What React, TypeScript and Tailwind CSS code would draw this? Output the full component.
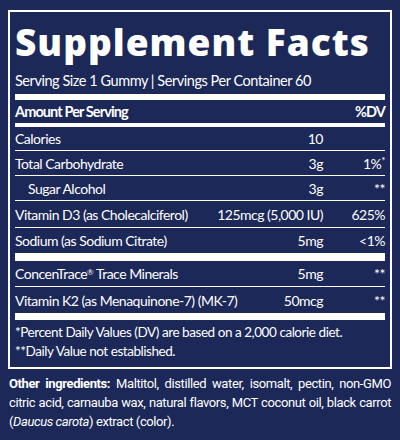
import React from 'react'

type Row = {
  label: React.ReactNode
  amount: string
  dv: React.ReactNode
  h: string
  indent?: boolean
}

const topRows: Row[] = [
  { label: 'Calories', amount: '10', dv: '', h: 'h-[24px]' },
  { label: 'Total Carbohydrate', amount: '3g', dv: <>1%<span className="align-top text-[10px]">*</span></>, h: 'h-[25px]' },
  { label: 'Sugar Alcohol', amount: '3g', dv: '**', h: 'h-[25px]', indent: true },
  { label: 'Vitamin D3 (as Cholecalciferol)', amount: '125mcg (5,000 IU)', dv: '625%', h: 'h-[27px]' },
  { label: 'Sodium (as Sodium Citrate)', amount: '5mg', dv: '<1%', h: 'h-[25px]' },
]

const bottomRows: Row[] = [
  {
    label: <>ConcenTrace<sup className="text-[8px]">®</sup> Trace Minerals</>,
    amount: '5mg',
    dv: '**',
    h: 'h-[26px]',
  },
  { label: 'Vitamin K2 (as Menaquinone-7) (MK-7)', amount: '50mcg', dv: '**', h: 'h-[26px]' },
]

function FactRow({ row, last }: { row: Row; last: boolean }) {
  return (
    <div className={`${row.h} flex items-center whitespace-nowrap ${last ? '' : 'border-b border-white'}`}>
      <div className={`flex-1 ${row.indent ? 'pl-[13px]' : ''}`}>{row.label}</div>
      <div className="text-right">{row.amount}</div>
      <div className="w-[62px] text-right">{row.dv}</div>
    </div>
  )
}

export default function App() {
  return (
    <div className="w-[400px] h-[440px] overflow-hidden bg-[#1c2858] text-white pt-[10px] px-[8px] font-['Lato',sans-serif] tracking-[-0.5px]">
      <div className="w-[384px] border-2 border-white px-[5px]">
        <div className="h-[58px] flex items-center font-['Open_Sans',sans-serif] font-extrabold text-[37px] tracking-[1px] leading-none">
          Supplement Facts
        </div>
        <div className="h-[22px] flex items-center text-[14.5px] tracking-[-0.45px]">
          Serving Size 1 Gummy | Servings Per Container 60
        </div>
        <div className="h-[6px] mt-[2px] bg-white" />
        <div className="h-[23px] flex items-center justify-between text-[14.5px] font-bold tracking-[-0.9px]">
          <span>Amount Per Serving</span>
          <span>%DV</span>
        </div>
        <div className="h-[4px] bg-white" />
        <div className="text-[14px]">
          {topRows.map((r, i) => (
            <FactRow key={i} row={r} last={i === topRows.length - 1} />
          ))}
        </div>
        <div className="h-[8px] bg-white" />
        <div className="text-[14px]">
          {bottomRows.map((r, i) => (
            <FactRow key={i} row={r} last={i === bottomRows.length - 1} />
          ))}
        </div>
        <div className="h-[7px] bg-white" />
        <div className="pt-[3px] pb-[6px] text-[13.5px] tracking-[-0.45px] leading-[19px] whitespace-nowrap">
          <p>*Percent Daily Values (DV) are based on a 2,000 calorie diet.</p>
          <p>**Daily Value not established.</p>
        </div>
      </div>
      <p className="mt-[5px] px-[1px] font-['Roboto',sans-serif] tracking-[-0.4px] text-[13px] leading-[19px] text-justify">
        <span className="font-bold">Other ingredients:</span> Maltitol, distilled water, isomalt, pectin, non-GMO
        citric acid, carnauba wax, natural flavors, MCT coconut oil, black carrot (<i>Daucus carota</i>) extract
        (color).
      </p>
    </div>
  )
}
